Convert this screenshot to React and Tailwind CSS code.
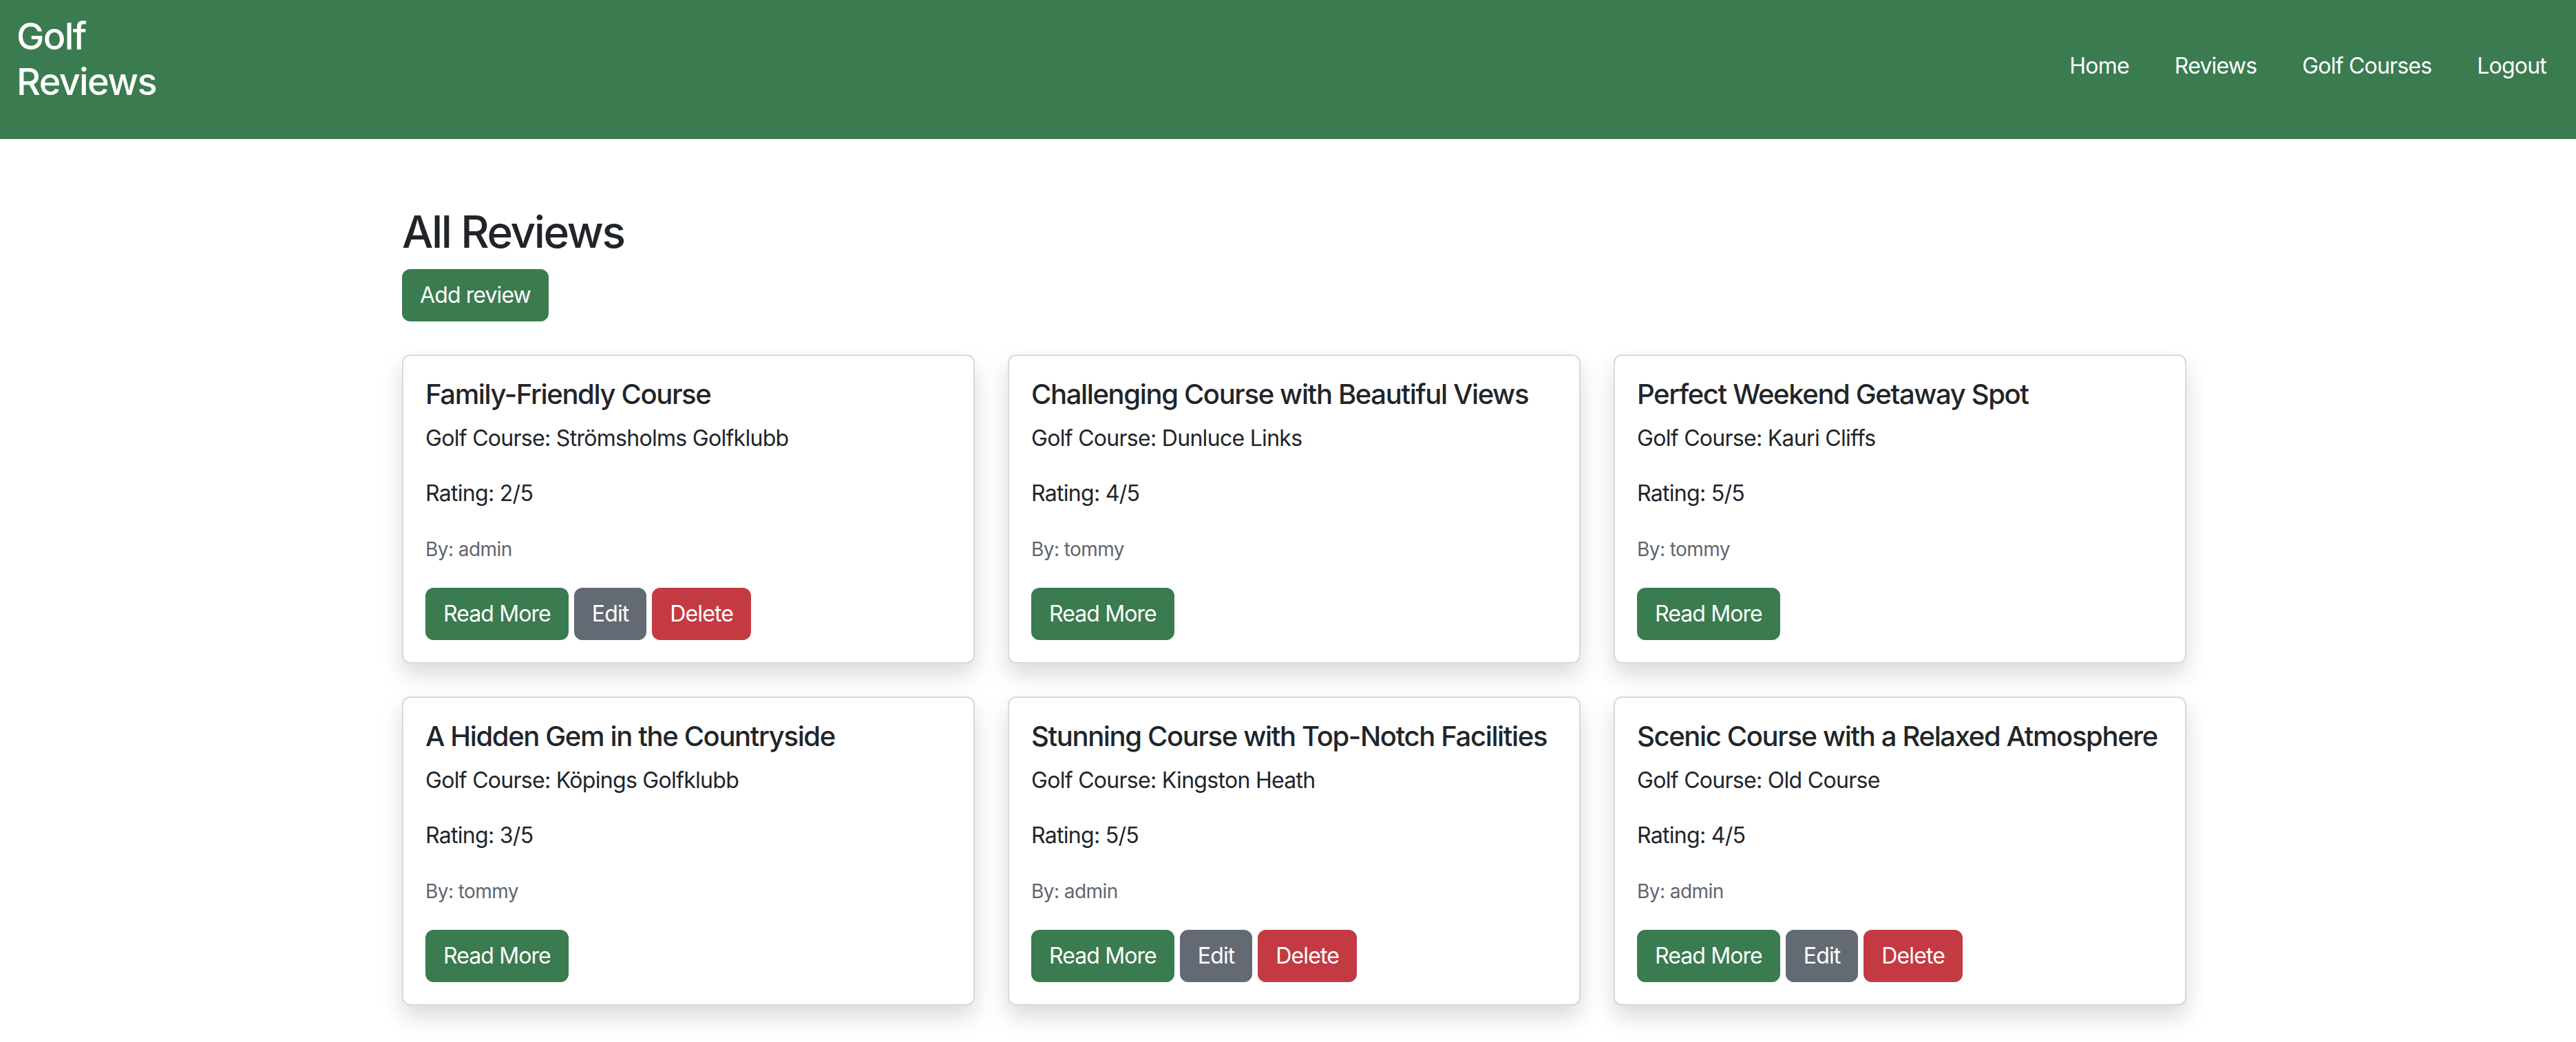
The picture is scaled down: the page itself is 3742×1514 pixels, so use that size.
import React from "react";

const reviews = [
  { title: "Family-Friendly Course", course: "Strömsholms Golfklubb", rating: 2, author: "admin", own: true },
  { title: "Challenging Course with Beautiful Views", course: "Dunluce Links", rating: 4, author: "tommy", own: false },
  { title: "Perfect Weekend Getaway Spot", course: "Kauri Cliffs", rating: 5, author: "tommy", own: false },
  { title: "A Hidden Gem in the Countryside", course: "Köpings Golfklubb", rating: 3, author: "tommy", own: false },
  { title: "Stunning Course with Top-Notch Facilities", course: "Kingston Heath", rating: 5, author: "admin", own: true },
  { title: "Scenic Course with a Relaxed Atmosphere", course: "Old Course", rating: 4, author: "admin", own: true },
];

const navLinks = ["Home", "Reviews", "Golf Courses", "Logout"];

const btn = "rounded-[12px] border-2 px-[24px] py-[12px] text-[32px] leading-[48px] tracking-[-0.028em] text-white";

const ReviewCard = ({ review }) => (
  <div className="rounded-[12px] border-2 border-[#d9d9da] bg-white p-[32px] shadow-[0_16px_32px_rgba(0,0,0,0.15)]">
    <h5 className="mb-[16px] text-[40px] font-medium leading-[48px] tracking-[-0.034em] text-[#212529]">{review.title}</h5>
    <p className="mb-[32px] text-[32px] leading-[48px] tracking-[-0.022em] text-[#212529]">Golf Course: {review.course}</p>
    <p className="mb-[32px] text-[32px] leading-[48px] tracking-[-0.022em] text-[#212529]">Rating: {review.rating}/5</p>
    <p className="mb-[32px] text-[32px] leading-[48px]">
      <small className="text-[28px] tracking-[-0.02em] text-[#5f666d]">By: {review.author}</small>
    </p>
    <div className="flex gap-[8px]">
      <button className={`${btn} border-[#3a7b50] bg-[#3a7b50]`}>Read More</button>
      {review.own && (
        <>
          <button className={`${btn} border-[#636a73] bg-[#636a73]`}>Edit</button>
          <button className={`${btn} border-[#c43a42] bg-[#c43a42]`}>Delete</button>
        </>
      )}
    </div>
  </div>
);

export default function App() {
  return (
    <div className="min-h-[1514px] bg-white font-['Inter',sans-serif] text-[#212529]">
      <nav className="flex h-[202px] items-center justify-between bg-[#3a7b50] px-[24px]">
        <a className="w-[220px] pb-[30px] text-[54px] font-medium leading-[66px] tracking-[-0.03em] text-white">Golf Reviews</a>
        <ul className="flex gap-[66px] pb-[10px] pr-[19px]">
          {navLinks.map((link) => (
            <li key={link}>
              <a className="text-[32px] leading-[48px] tracking-[-0.025em] text-white">{link}</a>
            </li>
          ))}
        </ul>
      </nav>

      <main className="ml-[584px] w-[2592px] pt-[96px]">
        <h2 className="mb-[16px] text-[64px] font-medium leading-[77px] tracking-[-0.037em]">All Reviews</h2>
        <div className="mb-[48px]">
          <button className={`${btn} border-[#3a7b50] bg-[#3a7b50]`}>Add review</button>
        </div>
        <div className="grid grid-cols-3 gap-x-[48px] gap-y-[48px]">
          {reviews.map((review) => (
            <ReviewCard key={review.title} review={review} />
          ))}
        </div>
      </main>
    </div>
  );
}
